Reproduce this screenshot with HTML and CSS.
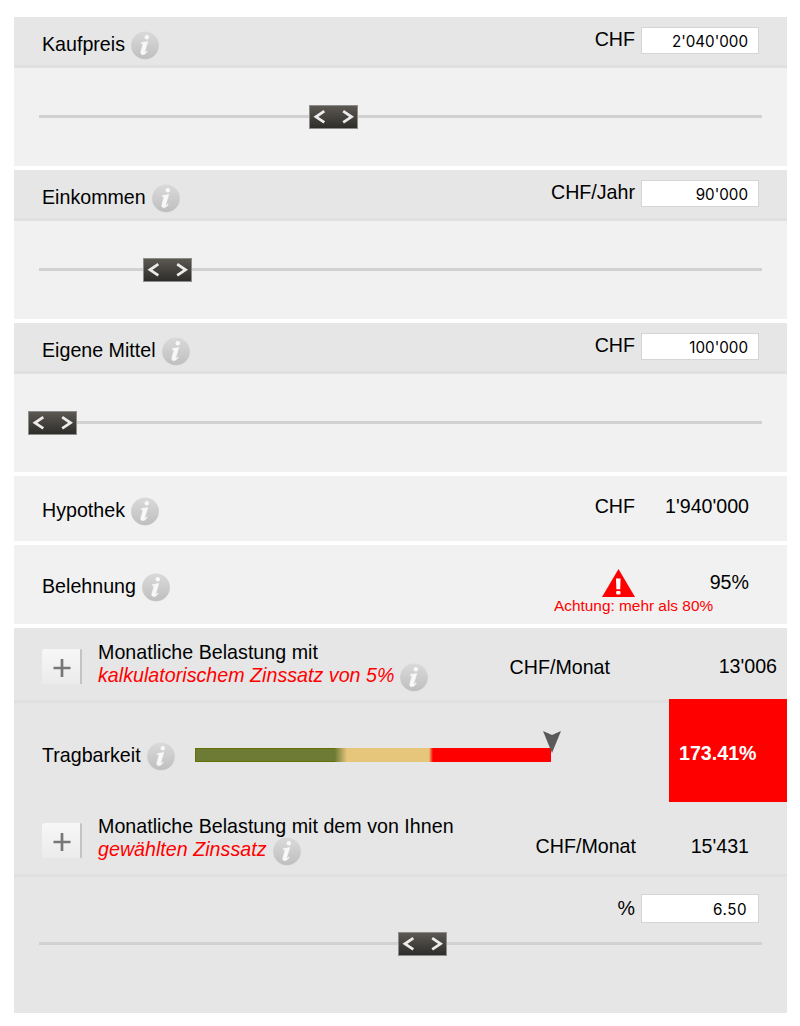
FILE: index.html
```html
<!DOCTYPE html>
<html lang="de">
<head>
<meta charset="utf-8">
<title>Hypothekenrechner</title>
<link rel="stylesheet" href="styles.css">
</head>
<body>
<svg class="defs" width="0" height="0" aria-hidden="true">
  <defs>
    <linearGradient id="disc" x1="0" y1="0" x2="0" y2="1"><stop offset="0" stop-color="#dadada"/><stop offset="1" stop-color="#bfbfbf"/></linearGradient>
    <symbol id="info" viewBox="0 0 28 29">
      <circle cx="14" cy="14.8" r="13.8" fill="#d6d6d6"/>
      <circle cx="14" cy="14.2" r="13.7" fill="url(#disc)"/>
      <circle cx="15.8" cy="6.3" r="2.2" fill="#f8f8f8"/>
      <path d="M10.3 11.6 L16.8 10.5 L13.8 20.6 Q13.5 22.2 15.8 20 L16.4 20.5 Q13.7 24 11.4 23.7 Q9.1 23.3 9.9 20.5 L12.1 12.8 L10.1 12.5Z" fill="#f8f8f8" stroke="#f8f8f8" stroke-width=".5"/>
    </symbol>
    <symbol id="arrows" viewBox="0 0 49 24">
      <path d="M15.3 6.2 L7 11.8 L15.3 17.4 M34.2 6.2 L42.5 11.8 L34.2 17.4" fill="none" stroke="#ececec" stroke-width="2.8"/>
    </symbol>
    <symbol id="plus" viewBox="0 0 18 20"><path d="M9 1V19M.5 10H17.5" stroke="#777" stroke-width="2.7"/></symbol>
  </defs>
</svg>
<main class="calculator">
  <section class="panel">
    <div class="head">
      <div class="label"><span>Kaufpreis</span><svg class="info"><use href="#info"/></svg></div>
      <span class="unit">CHF</span><input class="field" value="2'040'000">
    </div>
    <div class="slider"><div class="track"><div class="handle" style="left:270px"><svg><use href="#arrows"/></svg></div></div></div>
  </section>
  <section class="panel">
    <div class="head">
      <div class="label"><span>Einkommen</span><svg class="info"><use href="#info"/></svg></div>
      <span class="unit">CHF/Jahr</span><input class="field" value="90'000">
    </div>
    <div class="slider"><div class="track"><div class="handle" style="left:104px"><svg><use href="#arrows"/></svg></div></div></div>
  </section>
  <section class="panel">
    <div class="head">
      <div class="label"><span>Eigene Mittel</span><svg class="info"><use href="#info"/></svg></div>
      <span class="unit">CHF</span><input class="field" value="100'000">
    </div>
    <div class="slider"><div class="track"><div class="handle" style="left:-11px"><svg><use href="#arrows"/></svg></div></div></div>
  </section>
  <section class="panel mortgage">
    <div class="label"><span>Hypothek</span><svg class="info"><use href="#info"/></svg></div>
    <span class="unit">CHF</span><span class="value">1'940'000</span>
  </section>
  <section class="panel lending">
    <div class="label"><span>Belehnung</span><svg class="info"><use href="#info"/></svg></div>
    <div class="warning">
      <svg class="warning-icon" viewBox="0 0 33 28"><path d="M16.5 0 33 28H0Z" fill="#f00"/><path d="M14 9.6H18.6L18.2 20.3H14.4Z" fill="#fff"/><rect x="14.2" y="22" width="4.3" height="3.5" rx="1" fill="#fff"/></svg>
      <span>Achtung: mehr als 80%</span>
    </div>
    <span class="value">95%</span>
  </section>
  <section class="panel burden">
    <div class="cost">
      <button class="expand" aria-label="Details"><svg><use href="#plus"/></svg></button>
      <div class="text"><span>Monatliche Belastung mit</span>
        <div class="rate"><em>kalkulatorischem Zinssatz von 5%</em><svg class="info"><use href="#info"/></svg></div></div>
      <span class="unit">CHF/Monat</span><span class="value">13'006</span>
    </div>
    <div class="afford">
      <div class="label"><span>Tragbarkeit</span><svg class="info"><use href="#info"/></svg></div>
      <div class="meter"><svg class="pointer" viewBox="0 0 18 22"><path d="M0 0 9 4 18 0 9 22Z" fill="#5a5a5a"/></svg></div>
      <strong class="result">173.41%</strong>
    </div>
    <div class="cost chosen">
      <button class="expand" aria-label="Details"><svg><use href="#plus"/></svg></button>
      <div class="text"><span>Monatliche Belastung mit dem von Ihnen</span>
        <div class="rate"><em>gewählten Zinssatz</em><svg class="info"><use href="#info"/></svg></div></div>
      <span class="unit">CHF/Monat</span><span class="value">15'431</span>
    </div>
    <div class="interest"><span class="unit">%</span><input class="field" value="6.50"></div>
    <div class="slider"><div class="track"><div class="handle" style="left:359px"><svg><use href="#arrows"/></svg></div></div></div>
  </section>
</main>
</body>
</html>
```
FILE: styles.css
```css
*, *::before { box-sizing: border-box; }
body {
  margin: 0;
  background: #fff;
  color: #000;
  font: 19.65px/24px "Liberation Sans", Arial, sans-serif;
}
.defs { position: absolute; }
.calculator {
  display: flex;
  flex-direction: column;
  gap: 4px;
  width: 773px;
  margin: 17px 0 0 14px;
}
.panel { height: 149px; background: #f1f1f1; }
.head {
  display: flex;
  align-items: flex-start;
  height: 51px;
  padding: 10px 28px 0;
  background: #e6e6e6;
  border-bottom: 3px solid #e0e0e0;
}
.label {
  display: flex;
  align-items: center;
  gap: 6px;
  height: 29px;
  margin: 4px auto 0 0;
  white-space: nowrap;
}
.label > span { padding-bottom: 4px; }
.info { width: 28px; height: 29px; flex: none; }
.unit { margin: 0 6px 0 0; white-space: nowrap; }
.field {
  width: 118px;
  height: 27px;
  padding: 1px 10px 0 0;
  border: 1px solid #d5d5d5;
  background: #fff;
  color: #000;
  font: 15.2px Inter, sans-serif;
  text-align: right;
}
.slider { padding: 47px 25px 0; }
.track { position: relative; height: 3px; background: #d1d1d1; }
.handle {
  position: absolute;
  top: -10px;
  width: 49px;
  height: 24px;
  border: 1px solid #8c8c8a;
  background: linear-gradient(#5c5852, #2e2d2b);
}
.handle svg { display: block; width: 49px; height: 24px; margin: -1px; }
.mortgage {
  display: flex;
  height: 65px;
  padding: 17px 38px 0 28px;
}
.mortgage .unit { margin: 1px 30px 0 0; }
.mortgage .value { margin-top: 1px; }
.mortgage .label { margin-top: 4px; }
.lending {
  display: flex;
  height: 79px;
  padding: 24px 38px 0 28px;
}
.lending .label { margin-top: 4px; }
.lending .value { width: 53px; margin-top: 1px; text-align: right; }
.warning {
  display: flex;
  flex-direction: column;
  width: 142px;
  color: #f00;
  font-size: 15.4px;
  line-height: 18px;
  white-space: nowrap;
}
.warning-icon { width: 33px; height: 28px; margin-left: 48px; }
.burden { height: 385px; background: #e6e6e6; }
.cost {
  display: flex;
  height: 75px;
  padding: 13px 10px 0 28px;
  border-bottom: 3px solid #e0e0e0;
}
.expand {
  width: 40px;
  height: 35px;
  margin: 8px 16px 0 0;
  padding: 2px 0 0 1px;
  border: 0;
  border-right: 2px solid #c3c3c3;
  border-radius: 3px 2px 0 0;
  background: linear-gradient(#f7f7f7, #ebebeb);
}
.expand svg { display: block; width: 18px; height: 20px; margin: 0 auto; }
.text { line-height: 23px; letter-spacing: .02px; margin-right: auto; white-space: nowrap; }
.text > span { display: block; }
.rate { display: flex; height: 23px; gap: 6px; }
.rate em { color: #f00; }
.rate .info { margin-top: -1px; }
.cost .unit { margin: 14px 0 0; }
.cost .value { width: 167px; margin-top: 13px; text-align: right; }
.afford { display: flex; height: 99px; padding-left: 28px; }
.afford .label { width: 132px; margin: 39px 21px 0 0; }
.meter {
  position: relative;
  width: 356px;
  height: 14px;
  margin-top: 45px;
  background: linear-gradient(90deg, #6e7b35 0 140px, #e6c67b 152px 234px, #f00 238px);
}
.meter::before {
  content: "";
  display: block;
  width: 140px;
  height: 14px;
  border: solid #657000;
  border-width: 1px 0 1px 1px;
}
.pointer { position: absolute; left: 348px; top: -17px; width: 18px; height: 22px; }
.result {
  position: relative;
  width: 118px;
  height: 103px;
  margin: -4px 0 0 auto;
  padding: 42px 0 0 10px;
  background: #f00;
  color: #fff;
}
.chosen { padding-right: 38px; }
.chosen .unit { margin-top: 19px; }
.chosen .value { width: 113px; margin-top: 19px; }
.interest {
  display: flex;
  justify-content: flex-end;
  padding: 17px 28px 0;
}
.interest .unit { margin-top: 2px; }
.interest .field {
  height: 29px;
  padding: 1px 11px 0 0;
  letter-spacing: .5px;
}
.burden .slider { padding-top: 19px; }
```
